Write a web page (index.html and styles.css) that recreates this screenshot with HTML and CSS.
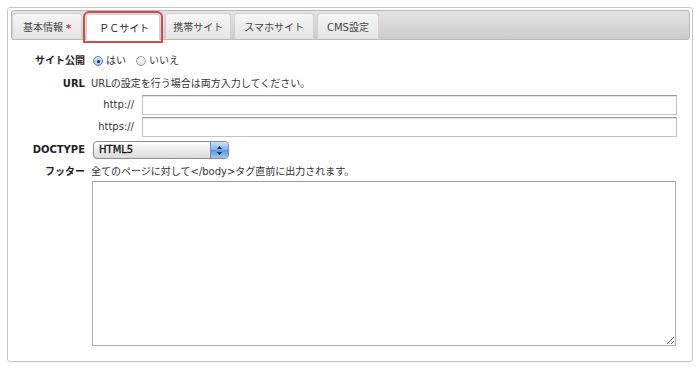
FILE: index.html
```html
<!DOCTYPE html>
<html lang="ja">
<head>
    <meta charset="UTF-8">
    <title>サイト設定</title>
    <link rel="stylesheet" href="styles.css">
</head>
<body>
    <div class="panel">
        <ul class="tabs">
            <li class="tab tab-basic">基本情報<span class="req">*</span></li>
            <li class="tab active">ＰＣサイト</li>
            <li class="tab tab-mobile">携帯サイト</li>
            <li class="tab">スマホサイト</li>
            <li class="tab">CMS設定</li>
        </ul>

        <div class="form">
            <div class="label row-public">サイト公開</div>
            <div class="value row-public radios">
                <span class="radio checked"></span><span class="radio-text">はい</span>
                <span class="radio"></span><span class="radio-text">いいえ</span>
            </div>

            <div class="label row-url">URL</div>
            <div class="value row-url">
                <p class="note">URLの設定を行う場合は両方入力してください。</p>
                <div class="url-grid">
                    <span class="sub-label">http://</span>
                    <input type="text" class="text-input">
                    <span class="sub-label">https://</span>
                    <input type="text" class="text-input">
                </div>
            </div>

            <div class="label row-doctype">DOCTYPE</div>
            <div class="value row-doctype">
                <div class="select">
                    <span class="select-text">HTML5</span>
                    <span class="select-btn">
                        <svg width="7" height="11" viewBox="0 0 7 11">
                            <path d="M3.5 1 L6 4 L1 4 Z" fill="#1d2b45"/>
                            <path d="M3.5 10 L6 7 L1 7 Z" fill="#1d2b45"/>
                        </svg>
                    </span>
                </div>
            </div>

            <div class="label row-footer">フッター</div>
            <div class="value row-footer">
                <p class="note">全てのページに対して&lt;/body&gt;タグ直前に出力されます。</p>
                <textarea class="footer-area"></textarea>
            </div>
        </div>
    </div>
</body>
</html>
```

FILE: styles.css
```css
body {
    margin: 0;
    background: #ffffff;
    font-family: "DejaVu Sans", "Noto Sans CJK JP", sans-serif;
    font-size: 10px;
    color: #333333;
}
.panel {
    margin: 7px 0 0 7px;
    width: 684px;
    height: 353px;
    border: 1px solid #c6c6c6;
    border-radius: 3px;
}
.tabs {
    list-style: none;
    margin: 2px 2px 0 3px;
    padding: 0;
    height: 28px;
    display: flex;
    align-items: flex-end;
    border: 1px solid #b9b9b9;
    border-radius: 3px;
    background: linear-gradient(#e4e4e4, #cbcbcb);
}
.tab {
    height: 27px;
    margin: 0 3px -1px 0;
    padding: 0 9px;
    box-sizing: border-box;
    display: flex;
    align-items: center;
    white-space: nowrap;
    background: linear-gradient(#f6f6f6, #e3e3e3);
    border: 1px solid #d0d0d0;
    border-bottom-color: #b9b9b9;
    border-radius: 3px 3px 0 0;
    color: #444444;
}
.tab-basic {
    padding: 0 10px;
}
.tab-mobile {
    padding: 0 7px;
}
.tab.active {
    padding: 0 10px 0 12px;
    margin: 0 5px -1px 1px;
    height: 26px;
    background: #ffffff;
    border-bottom-color: #ffffff;
    outline: 2px solid #cd4c4c;
    outline-offset: 1px;
    color: #222222;
}
.req {
    color: #d93434;
    font-weight: bold;
    margin: 4px 0 0 3px;
}
.form {
    display: grid;
    grid-template-columns: 57px 1fr;
    column-gap: 6px;
    padding: 13px 15px 0 20px;
}
.label {
    text-align: right;
    font-weight: bold;
    line-height: 16px;
    color: #222222;
}
.value {
    line-height: 16px;
}
.row-url {
    margin-top: 7px;
}
.row-doctype {
    margin-top: 4px;
    line-height: 18px;
}
.row-footer {
    margin-top: 5px;
}
.note {
    margin: 0;
}
.radios {
    display: flex;
    align-items: center;
    padding-left: 2px;
}
.radio {
    width: 10px;
    height: 10px;
    box-sizing: border-box;
    border: 1px solid #9a9a9a;
    border-radius: 50%;
    background: linear-gradient(#ffffff, #e4e4e4);
    position: relative;
    margin-right: 3px;
}
.radio.checked {
    border-color: #4b7fc4;
    background: linear-gradient(#d9e8fa, #9fc2ee);
}
.radio.checked::after {
    content: "";
    position: absolute;
    left: 2.5px;
    top: 2.5px;
    width: 3px;
    height: 3px;
    border-radius: 50%;
    background: #1c2f4e;
}
.radio-text {
    margin-right: 10px;
}
.url-grid {
    display: grid;
    grid-template-columns: 43px 1fr;
    column-gap: 8px;
    row-gap: 2px;
    margin-top: 3px;
    align-items: center;
}
.sub-label {
    text-align: right;
}
.text-input {
    height: 20px;
    box-sizing: border-box;
    margin: 0;
    border: 1px solid #c4c4c4;
    border-top-color: #9a9a9a;
    box-shadow: inset 0 1px 1px #e0e0e0;
    background: #ffffff;
}
.select {
    margin-left: 2px;
    width: 136px;
    height: 18px;
    box-sizing: border-box;
    border: 1px solid #8c8c8c;
    border-radius: 4px;
    background: linear-gradient(#ffffff, #e9e9e9 60%, #dadada);
    display: flex;
    align-items: center;
    justify-content: space-between;
    overflow: hidden;
}
.select-text {
    padding-left: 5px;
    color: #111111;
    -webkit-text-stroke: 0.3px #111111;
}
.select-btn {
    width: 17px;
    height: 16px;
    display: flex;
    align-items: center;
    justify-content: center;
    border-left: 1px solid #6d8fbd;
    border-radius: 0 3px 3px 0;
    background: linear-gradient(#cfe2fb, #7fb0ee 50%, #5b96e3 51%, #9cc5f5);
}
.footer-area {
    display: block;
    margin: 1px 0 0 1px;
    width: 584px;
    height: 165px;
    box-sizing: border-box;
    border: 1px solid #b0b0b0;
    border-top-color: #9a9a9a;
    resize: both;
    font-family: inherit;
}
```
